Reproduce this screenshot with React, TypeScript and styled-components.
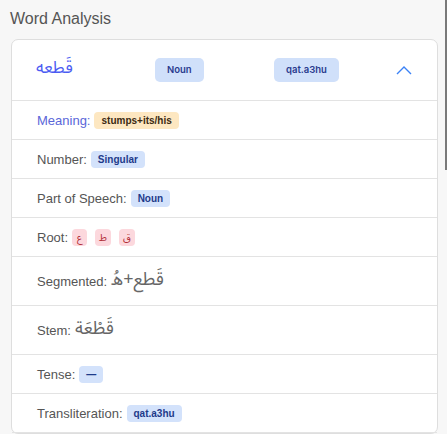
import React, { useState } from "react";
import styled, { createGlobalStyle } from "styled-components";

const GlobalStyle = createGlobalStyle`
  html, body {
    margin: 0;
    padding: 0;
    background: #f7f7f7;
    font-family: "Liberation Sans", Arial, sans-serif;
  }
`;

type Tone = "blue" | "orange" | "red";

const toneColors: Record<Tone, { bg: string; fg: string }> = {
  blue: { bg: "#d3e2fb", fg: "#1e3a8a" },
  orange: { bg: "#fde7c1", fg: "#3b2a12" },
  red: { bg: "#fcd8dd", fg: "#b02a33" },
};

const arabicFont = `"Noto Sans Arabic", "Noto Naskh Arabic", "DejaVu Sans", sans-serif`;

const Page = styled.div`
  padding: 8px 9px 0 11px;
  overflow: hidden;
  height: 434px;
  box-sizing: border-box;
`;

const Title = styled.h2`
  margin: 0 0 9px -1px;
  font-size: 16px;
  line-height: 22px;
  font-weight: 400;
  color: #555;
`;

const Card = styled.div`
  background: #fff;
  border: 1px solid #dedede;
  border-radius: 7px;
`;

const Header = styled.div`
  display: grid;
  grid-template-columns: 119px 119px 1fr auto;
  align-items: center;
  height: 60px;
  padding: 0 25px 0 24px;
  border-bottom: 1px solid #e3e3e3;
`;

const HeaderWord = styled.span`
  font-family: ${arabicFont};
  font-size: 17px;
  color: #4b5cf2;
  justify-self: start;
  margin-top: -4px;
`;

const HeaderBadge = styled.span`
  justify-self: start;
  background: #d0e0fa;
  color: #2a3b8f;
  font-family: Inter, "Liberation Sans", sans-serif;
  font-size: 9.5px;
  font-weight: 600;
  line-height: 12px;
  padding: 6px 12px;
  border-radius: 5px;
  margin-top: -1px;
`;

const Toggle = styled.button`
  border: 0;
  background: none;
  padding: 0;
  width: 16px;
  height: 10px;
  display: flex;
  cursor: pointer;
`;

const Row = styled.div<{ $tall?: boolean }>`
  display: flex;
  align-items: center;
  height: ${(p) => (p.$tall ? 48 : 38)}px;
  padding: 0 25px;
  border-bottom: 1px solid #e3e3e3;
  font-size: 13px;
  color: #555;
`;

const Label = styled.span<{ $accent?: boolean }>`
  color: ${(p) => (p.$accent ? "#5a66d9" : "#555")};
  margin-right: 4px;
`;

const Badge = styled.span<{ $tone: Tone }>`
  background: ${(p) => toneColors[p.$tone].bg};
  color: ${(p) => toneColors[p.$tone].fg};
  font-size: 10px;
  font-weight: 700;
  line-height: 13px;
  padding: 2px 7px;
  border-radius: 4px;
`;

const RootList = styled.span`
  display: flex;
  gap: 8px;
`;

const RootBadge = styled(Badge)`
  font-family: ${arabicFont};
  font-weight: 400;
  font-size: 10px;
  padding: 2px 4px;
  min-width: 7px;
  text-align: center;
`;

const Arabic = styled.span`
  font-family: ${arabicFont};
  font-size: 18px;
  color: #666;
  margin-top: -4px;
`;

const ScrollThumb = styled.div`
  position: fixed;
  top: 0;
  right: 0;
  width: 2px;
  height: 170px;
  background: #7a7a7a;
`;

const Chevron = ({ open }: { open: boolean }) => (
  <svg width="16" height="10" viewBox="0 0 16 10" fill="none">
    <polyline
      points={open ? "1,9 8,2 15,9" : "1,1 8,8 15,1"}
      stroke="#3b82f6"
      strokeWidth="1.4"
    />
  </svg>
);

const App: React.FC = () => {
  const [open, setOpen] = useState<boolean>(true);

  return (
    <Page>
      <GlobalStyle />
      <Title>Word Analysis</Title>
      <Card>
        <Header>
          <HeaderWord dir="rtl">قَطعه</HeaderWord>
          <HeaderBadge>Noun</HeaderBadge>
          <HeaderBadge>qat.a3hu</HeaderBadge>
          <Toggle onClick={() => setOpen(!open)}>
            <Chevron open={open} />
          </Toggle>
        </Header>
        {open && (
          <>
            <Row>
              <Label $accent>Meaning:</Label>
              <Badge $tone="orange">stumps+its/his</Badge>
            </Row>
            <Row>
              <Label>Number:</Label>
              <Badge $tone="blue">Singular</Badge>
            </Row>
            <Row>
              <Label>Part of Speech:</Label>
              <Badge $tone="blue">Noun</Badge>
            </Row>
            <Row>
              <Label>Root:</Label>
              <RootList>
                {["ع", "ط", "ق"].map((letter) => (
                  <RootBadge key={letter} $tone="red">
                    {letter}
                  </RootBadge>
                ))}
              </RootList>
            </Row>
            <Row $tall>
              <Label>Segmented:</Label>
              <Arabic dir="rtl">قَطع+هُ</Arabic>
            </Row>
            <Row $tall>
              <Label>Stem:</Label>
              <Arabic dir="rtl">قَطْعَة</Arabic>
            </Row>
            <Row>
              <Label>Tense:</Label>
              <Badge $tone="blue">—</Badge>
            </Row>
            <Row>
              <Label>Transliteration:</Label>
              <Badge $tone="blue">qat.a3hu</Badge>
            </Row>
          </>
        )}
      </Card>
      <ScrollThumb />
    </Page>
  );
};

export default App;
